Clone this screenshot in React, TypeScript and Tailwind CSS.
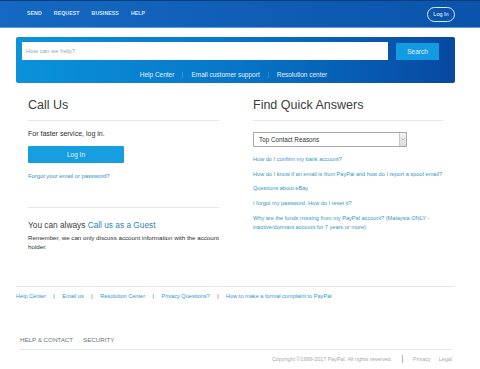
const navItems = ["SEND", "REQUEST", "BUSINESS", "HELP"];

const quickLinks = [
  "How do I confirm my bank account?",
  "How do I know if an email is from PayPal and how do I report a spoof email?",
  "Questions about eBay",
  "I forgot my password. How do I reset it?",
];

const footerLinks = [
  "Help Center",
  "Email us",
  "Resolution Center",
  "Privacy Questions?",
  "How to make a formal complaint to PayPal",
];

const Header = () => (
  <header className="h-[28px] bg-linear-to-r from-[#1569c2] to-[#0b53ab] border-t border-[#0a3d7c] border-b border-b-[#5aa0e0] flex items-center">
    <nav className="flex gap-[12px] pl-[27px] text-[5.2px] font-bold text-[#d5e6f8] tracking-[0.1px]">
      {navItems.map((item) => (
        <span key={item}>{item}</span>
      ))}
    </nav>
    <button className="ml-auto mr-[25px] h-[15px] w-[28px] rounded-full border border-[#d9e8f8] text-[5.5px] text-white flex items-center justify-center">
      Log In
    </button>
  </header>
);

const SearchPanel = () => (
  <div className="mt-[9px] ml-[16px] w-[439px] h-[46px] rounded-[2px] bg-linear-to-r from-[#0b92da] via-[#0876c8] to-[#0848a1] px-[6px] pt-[5px]">
    <div className="flex items-start">
      <input
        className="h-[18px] w-[366px] bg-white px-[4px] text-[6px] text-[#999] outline-none placeholder:text-[#9aa]"
        placeholder="How can we help?"
      />
      <button className="ml-[8px] mt-[1px] h-[17px] w-[43px] bg-[#139be2] text-[6.5px] text-[#e3f3fc]">
        Search
      </button>
    </div>
    <div className="mt-[10px] flex justify-center items-center text-[6.5px] text-[#e6f1fb] pr-[4px]">
      <span>Help Center</span>
      <span className="mx-[8px] h-[6px] w-px bg-[#3f8fd0]" />
      <span>Email customer support</span>
      <span className="mx-[8px] h-[6px] w-px bg-[#3a7fc6]" />
      <span>Resolution center</span>
    </div>
  </div>
);

const CallUs = () => (
  <div className="w-[191px]">
    <h2 className="text-[12.5px] leading-[14px] text-[#3a3c3d] pt-[1px]">Call Us</h2>
    <div className="mt-[8px] h-px bg-[#e5e7e8]" />
    <p className="mt-[8px] text-[7px] leading-[9px] text-[#2c2e2f]">For faster service, log in.</p>
    <button className="mt-[8px] h-[17px] w-[96px] rounded-[1px] bg-[#169ee0] text-[6.5px] text-[#e8f5fc]">
      Log In
    </button>
    <p className="mt-[8px] text-[5.8px] leading-[8px] text-[#2a92c4]">Forgot your email or password?</p>
    <div className="mt-[27px] h-px bg-[#e5e7e8]" />
    <p className="mt-[12px] text-[8.3px] leading-[10px] text-[#3a3c3d]">
      You can always <span className="text-[#2f7fb5]">Call us as a Guest</span>
    </p>
    <p className="mt-[3px] text-[6.2px] leading-[9px] text-[#2c2e2f]">
      Remember, we can only discuss account information with the account holder.
    </p>
  </div>
);

const QuickAnswers = () => (
  <div className="w-[190px]">
    <h2 className="text-[12.5px] leading-[14px] text-[#3a3c3d] pt-[1px]">Find Quick Answers</h2>
    <div className="mt-[8px] h-px bg-[#e5e7e8]" />
    <div className="mt-[11px] flex h-[15px] w-[154px] border border-[#a9a9a9] bg-white">
      <span className="flex-1 pl-[5px] text-[6.3px] leading-[13px] text-[#333]">Top Contact Reasons</span>
      <span className="w-[7px] border-l border-[#c8c8c8] bg-linear-to-b from-[#f4f4f4] to-[#dcdcdc] flex items-center justify-center">
        <svg width="4" height="3" viewBox="0 0 4 3">
          <path d="M0.5 0.5 L2 2 L3.5 0.5" stroke="#888" strokeWidth="0.6" fill="none" />
        </svg>
      </span>
    </div>
    <ul className="mt-[8px] text-[5.6px] leading-[9.4px] text-[#3596c6]">
      {quickLinks.map((link) => (
        <li key={link} className="mb-[5.3px]">{link}</li>
      ))}
      <li>
        Why are the funds missing from my PayPal account? (Malaysia ONLY - inactive/dormant account for 7 years or more)
      </li>
    </ul>
  </div>
);

const Footer = () => (
  <footer>
    <div className="mt-[35px] ml-[16px] w-[439px] border-t border-[#e3e5e6] pt-[5px] flex items-center text-[5.6px] leading-[8px] text-[#3596c6]">
      {footerLinks.map((link, i) => (
        <span key={link} className="flex items-center">
          {i > 0 && <span className="mx-[7.5px] text-[#555]">|</span>}
          {link}
        </span>
      ))}
    </div>
    <div className="mt-[36px] ml-[20px] w-[432px]">
      <div className="flex gap-[10px] text-[6.2px] leading-[8px] text-[#6c7378] pb-[5px] border-b border-[#e3e5e6]">
        <span>HELP &amp; CONTACT</span>
        <span>SECURITY</span>
      </div>
      <div className="flex justify-end items-center pt-[5px] text-[5.4px] leading-[8px] text-[#a4a9ac]">
        <span>Copyright ©1999-2017 PayPal. All rights reserved.</span>
        <span className="mx-[10px] h-[8px] w-px bg-[#b0b4b6]" />
        <span>Privacy</span>
        <span className="ml-[8px]">Legal</span>
      </div>
    </div>
  </footer>
);

export default function App() {
  return (
    <div className="w-[480px] h-[369px] overflow-hidden bg-white font-['Liberation_Sans',Arial,sans-serif]">
      <Header />
      <SearchPanel />
      <div className="ml-[28px] mt-[14px] flex gap-[34px]">
        <CallUs />
        <QuickAnswers />
      </div>
      <Footer />
    </div>
  );
}
